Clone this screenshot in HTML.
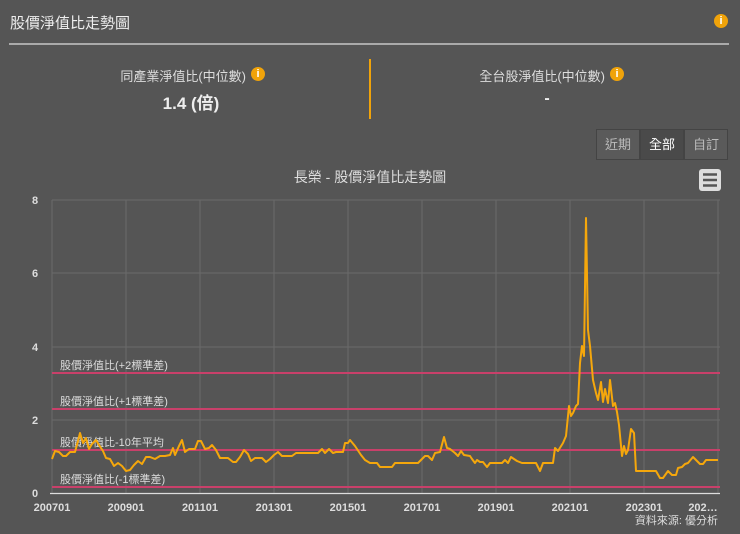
<!DOCTYPE html>
<html><head><meta charset="utf-8"><style>
body{margin:0;width:740px;height:534px;background:#555;font-family:"Liberation Sans","Noto Sans CJK TC",sans-serif;color:#e6e6e6;position:relative;overflow:hidden}
.a{position:absolute;white-space:nowrap}
.info{position:absolute;width:14px;height:14px;border-radius:50%;background:#f0a30a;color:#fff;font-size:11px;font-weight:bold;text-align:center;line-height:14px}
.btn{position:absolute;top:129px;height:31px;width:44px;border:1px solid #444;box-sizing:border-box;text-align:center;line-height:29px;font-size:13px;color:#bbb;background:#5a5a5a}
</style></head><body>
<div class="a" style="left:10px;top:12px;font-size:15px;color:#eee">股價淨值比走勢圖</div>
<div class="info" style="left:714px;top:14px">i</div>
<div class="a" style="left:9px;top:43px;width:720px;height:2px;background:#aaa"></div>
<div class="a" style="left:46px;top:66px;width:200px;text-align:right;font-size:13px;color:#ddd">同產業淨值比(中位數)</div>
<div class="info" style="left:251px;top:67px">i</div>
<div class="a" style="left:91px;top:89px;width:200px;text-align:center;font-size:17px;font-weight:bold;color:#eee">1.4 (倍)</div>
<div class="a" style="left:369px;top:59px;width:2px;height:60px;background:#f0a30a"></div>
<div class="a" style="left:405px;top:66px;width:200px;text-align:right;font-size:13px;color:#ddd">全台股淨值比(中位數)</div>
<div class="info" style="left:610px;top:67px">i</div>
<div class="a" style="left:537px;top:90px;width:20px;text-align:center;font-size:16px;font-weight:bold;color:#eee">-</div>
<div class="btn" style="left:596px">近期</div>
<div class="btn" style="left:640px;background:#4a4a4a;color:#fff">全部</div>
<div class="btn" style="left:684px">自訂</div>
<div class="a" style="left:220px;top:167px;width:300px;text-align:center;font-size:14px;color:#ddd">長榮 - 股價淨值比走勢圖</div>
<svg class="a" style="left:0;top:0" width="740" height="534">
<rect x="699" y="169" width="22" height="22" rx="3" fill="#ddd"/>
<g stroke="#555" stroke-width="2.5"><line x1="703" y1="174.5" x2="717" y2="174.5"/><line x1="703" y1="180" x2="717" y2="180"/><line x1="703" y1="185.5" x2="717" y2="185.5"/></g>
<g stroke="#6a6a6a" stroke-width="1">
<line x1="52" y1="200" x2="720" y2="200"/><line x1="52" y1="273" x2="720" y2="273"/><line x1="52" y1="347" x2="720" y2="347"/><line x1="52" y1="420" x2="720" y2="420"/>
<line x1="52" y1="200" x2="52" y2="493"/><line x1="126" y1="200" x2="126" y2="493"/><line x1="200" y1="200" x2="200" y2="493"/><line x1="274" y1="200" x2="274" y2="493"/><line x1="348" y1="200" x2="348" y2="493"/><line x1="422" y1="200" x2="422" y2="493"/><line x1="496" y1="200" x2="496" y2="493"/><line x1="570" y1="200" x2="570" y2="493"/><line x1="644" y1="200" x2="644" y2="493"/><line x1="718" y1="200" x2="718" y2="493"/>
</g>
<line x1="50" y1="493.5" x2="720" y2="493.5" stroke="#ddd" stroke-width="1.2"/>
<g stroke="#c9406a" stroke-width="2"><line x1="52" y1="373" x2="720" y2="373"/><line x1="52" y1="409" x2="720" y2="409"/><line x1="52" y1="450" x2="720" y2="450"/><line x1="52" y1="487" x2="720" y2="487"/></g>
<g font-size="11" fill="#ddd" font-family="Liberation Sans,Noto Sans CJK TC,sans-serif">
<text x="60" y="369">股價淨值比(+2標準差)</text><text x="60" y="405">股價淨值比(+1標準差)</text><text x="60" y="446">股價淨值比-10年平均</text><text x="60" y="483">股價淨值比(-1標準差)</text>
</g>
<polyline fill="none" stroke="#f5a70c" stroke-width="2" stroke-linejoin="round" points="52,459 55,451 59,452 63,456 66,456 70,452 75,452 78,441 80,433 83,443 86,438 89,449 92,444 96,440 99,445 103,451 106,458 110,459 114,466 118,463 122,466 126,471 130,470 134,465 138,461 142,464 146,457 150,457 155,459 160,456 165,456 170,455 173,448 175,455 179,446 182,440 185,452 189,449 195,449 198,441 201,441 205,449 209,448 212,445 216,450 220,458 228,458 233,462 236,462 240,457 244,450 248,454 251,461 255,458 262,458 266,462 270,459 274,455 278,452 282,456 292,456 296,453 318,453 322,449 325,453 329,449 333,453 336,452 343,452 345,443 348,443 350,440 355,446 361,455 365,460 370,463 377,463 380,467 392,467 395,463 418,463 425,456 428,456 432,460 435,453 440,452 444,437 447,448 450,449 455,453 458,456 461,451 464,455 470,456 472,459 475,463 477,460 480,462 483,462 487,467 490,463 502,463 505,460 508,463 511,457 514,459 517,461 522,463 536,463 540,471 543,463 553,463 555,448 558,451 563,443 566,436 569,406 571,416 573,413 576,406 578,404 580,363 582,346 584,356 586,218 588,330 590,346 593,380 596,393 598,400 601,382 603,402 605,389 608,403 610,380 613,406 615,403 617,412 619,425 622,456 624,446 626,454 628,450 631,429 634,433 636,471 656,471 660,478 663,478 668,471 672,475 676,475 678,468 682,467 685,464 688,463 693,457 700,464 703,464 706,460 718,460"/>
<g font-size="11" fill="#ddd" font-weight="bold" text-anchor="middle" font-family="Liberation Sans,sans-serif">
<text x="35" y="204">8</text><text x="35" y="277">6</text><text x="35" y="351">4</text><text x="35" y="424">2</text><text x="35" y="497">0</text>
<text x="52" y="511">200701</text><text x="126" y="511">200901</text><text x="200" y="511">201101</text><text x="274" y="511">201301</text><text x="348" y="511">201501</text><text x="422" y="511">201701</text><text x="496" y="511">201901</text><text x="570" y="511">202101</text><text x="644" y="511">202301</text><text x="703" y="511">202…</text>
</g>
<text x="718" y="524" font-size="11" fill="#ddd" text-anchor="end" font-family="Liberation Sans,Noto Sans CJK TC,sans-serif">資料來源: 優分析</text>
</svg>
</body></html>
